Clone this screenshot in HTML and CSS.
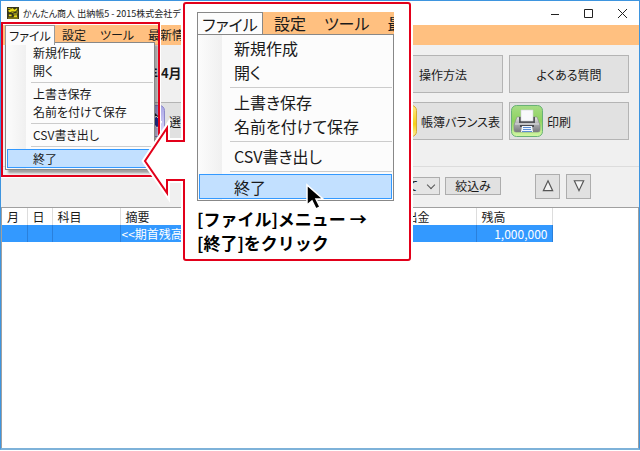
FILE: index.html
```html
<!DOCTYPE html>
<html lang="ja">
<head>
<meta charset="utf-8">
<title>かんたん商人 出納帳5</title>
<link rel="stylesheet" href="styles.css">
</head>
<body>
<main class="window">
  <header class="titlebar">
    <svg class="app-icon" viewBox="0 0 13 13" aria-hidden="true">
      <rect width="13" height="13" fill="#37361c"/>
      <path d="M1 1h3v1H1zM6 1l2 2 3-2v2L9 5H5L3 6 1 4M2 8h3v2H2zM7 7h4v1H7zM8 9h3v2H7" fill="#e9dc16"/>
      <path d="M1 12h11M5 6h2M11 4v3" stroke="#b9ae1c" fill="none"/>
    </svg>
    <h1 class="title">かんたん商人 出納帳5 - 2015株式会社デネ</h1>
    <button class="win-btn" aria-label="最小化"><svg viewBox="0 0 11 11"><path d="M2 6.500h8"/></svg></button>
    <button class="win-btn" aria-label="最大化"><svg viewBox="0 0 11 11"><path d="M1.500 1.500h8v8h-8z"/></svg></button>
    <button class="win-btn" aria-label="閉じる"><svg viewBox="0 0 11 11"><path d="M1 1l9 9M10 1l-9 9"/></svg></button>
  </header>

  <nav class="menubar">
    <button class="menu-tab menu-tab-open">ファイル</button>
    <button class="menu-tab">設定</button>
    <button class="menu-tab">ツール</button>
    <button class="menu-tab">最新情</button>
    <div class="menu">
      <button class="menu-item">新規作成</button>
      <button class="menu-item">開く</button>
      <hr class="menu-line">
      <button class="menu-item">上書き保存</button>
      <button class="menu-item">名前を付けて保存</button>
      <hr class="menu-line">
      <button class="menu-item">CSV書き出し</button>
      <hr class="menu-line">
      <button class="menu-item menu-item-active">終了</button>
    </div>
  </nav>

  <section class="toolbar">
    <p class="period">年 4月</p>
    <button class="tool tool-help">操作方法</button>
    <button class="tool tool-faq">よくある質問</button>
    <button class="tool tool-icon tool-select">
      <svg viewBox="0 0 32 32" aria-hidden="true">
        <defs><linearGradient id="violet" x2="0" y2="1"><stop stop-color="#a9a6e4"/><stop offset="1" stop-color="#e0dcff"/></linearGradient></defs>
        <rect x=".5" y=".5" width="31" height="31" rx="5" fill="url(#violet)" stroke="#8d89cb"/>
        <path d="M14 16l8-8 3 3-8 10z" fill="#1b1c26"/>
        <path d="M23 11l6 6-5 6-5-6z" fill="#2637a3" stroke="#fff"/>
      </svg>選択</button>
    <button class="tool tool-icon tool-balance">
      <svg viewBox="0 0 32 32" aria-hidden="true">
        <defs><linearGradient id="gold" x2="0" y2="1"><stop stop-color="#ffe98a"/><stop offset=".6" stop-color="#f5cf1c"/><stop offset="1" stop-color="#fff0a0"/></linearGradient></defs>
        <rect x=".5" y=".5" width="31" height="31" rx="5" fill="url(#gold)" stroke="#d4aa35"/>
      </svg>帳簿バランス表</button>
    <button class="tool tool-icon tool-print">
      <svg viewBox="0 0 32 32" aria-hidden="true">
        <defs>
          <linearGradient id="green" x2="0" y2="1"><stop stop-color="#a6dc86"/><stop offset=".5" stop-color="#8fd35f"/><stop offset="1" stop-color="#d3f8a4"/></linearGradient>
          <linearGradient id="steel" x2="0" y2="1"><stop stop-color="#e9e9ea"/><stop offset=".5" stop-color="#a8a9ad"/><stop offset="1" stop-color="#77787c"/></linearGradient>
        </defs>
        <rect x=".5" y=".5" width="31" height="31" rx="5" fill="url(#green)" stroke="#69b177"/>
        <path d="M6 12h20l3 8v5q0 2-2 2H5q-2 0-2-2v-5z" fill="url(#steel)" stroke="#85868a" stroke-width=".6"/>
        <path d="M8 12h2v4h12v-4h2v6H8z" fill="#55565b"/>
        <path d="M10 5h12v11H10z" fill="#f8f9fb" stroke="#d0d2d6" stroke-width=".6"/>
        <path d="M4 19h24" stroke="#dcdddf"/>
        <path d="M9 20h14v2H9z" fill="#4b4c51"/>
        <path d="M11 21h10l1 6H10z" fill="#f3f7ff"/>
        <path d="M12 22.500h8M12 24.500h8M11 26.500h10" stroke="#5b8ed4"/>
      </svg>印刷</button>
  </section>

  <section class="filters">
    <span class="kind-box"><select class="kind" aria-label="表示する科目"><option>すべて</option></select></span>
    <button class="narrow">絞込み</button>
    <button class="step step-up" aria-label="上へ"><svg viewBox="0 0 12 12"><path d="M6 1.500l4 8.500H2z"/></svg></button>
    <button class="step" aria-label="下へ"><svg viewBox="0 0 12 12"><path d="M2 1.500h8l-4 8.500z"/></svg></button>
  </section>

  <section class="ledger">
    <table class="book">
      <colgroup><col class="c-day"><col class="c-day"><col class="c-item"><col class="c-note"><col class="c-money"><col class="c-money"><col class="c-money"></colgroup>
      <thead><tr><th>月</th><th>日</th><th>科目</th><th>摘要</th><th></th><th>出金</th><th>残高</th></tr></thead>
      <tbody><tr><td></td><td></td><td></td><td class="note">&lt;&lt;期首残高</td><td></td><td></td><td class="amount">1,000,000</td></tr></tbody>
    </table>
  </section>

  <div class="focus-frame"></div>

  <aside class="callout">
    <svg class="callout-shape" viewBox="0 0 274 264" aria-hidden="true">
      <path d="M46 3H268q2 0 2 2V258q0 2-2 2H46q-2 0-2-2V180H27V193L5 161L27 128V141H44V5q0-2 2-2z" fill="#fff" stroke="#fff" stroke-width="6"/>
      <path d="M46 3H268q2 0 2 2V258q0 2-2 2H46q-2 0-2-2V180H27V193L5 161L27 128V141H44V5q0-2 2-2z" fill="#fff" stroke="#e2001a" stroke-width="2"/>
    </svg>
    <div class="sample">
      <div class="sample-bar">
        <button class="sample-tab sample-tab-open">ファイル</button>
        <button class="sample-tab">設定</button>
        <button class="sample-tab">ツール</button>
        <button class="sample-tab">最</button>
      </div>
      <div class="sample-menu">
        <button class="sample-item">新規作成</button>
        <button class="sample-item">開く</button>
        <hr class="sample-line">
        <button class="sample-item">上書き保存</button>
        <button class="sample-item">名前を付けて保存</button>
        <hr class="sample-line">
        <button class="sample-item">CSV書き出し</button>
        <hr class="sample-line">
        <button class="sample-item sample-item-active">終了</button>
      </div>
      <svg class="pointer" viewBox="0 0 20 28" aria-hidden="true"><path d="M2 2v20l5-4 4 8 4-2-4-8h7z" fill="#000" stroke="#fff" stroke-width="1.500"/></svg>
    </div>
    <p class="caption">[ファイル]メニュー →<br>[終了]をクリック</p>
  </aside>
</main>
</body>
</html>
```
FILE: styles.css
```css
* { box-sizing: border-box; }

body {
  margin: 0;
  font-family: "Noto Sans CJK JP", sans-serif;
  font-size: 12px;
  font-feature-settings: "palt";
  color: #1a1a1a;
  background: #fff;
}

button, select {
  margin: 0;
  padding: 0;
  border: 0;
  font: inherit;
  font-feature-settings: inherit;
  color: inherit;
  background: none;
}

p, h1 { margin: 0; }

.window {
  position: relative;
  display: flex;
  flex-direction: column;
  min-height: 450px;
  height: calc(100vh - 1px);
  overflow: hidden;
  border: 1px solid #3e95df;
  border-bottom: 2px solid #7eb2d9;
  background: #f0f0f0;
}

/* Title bar */
.titlebar {
  display: flex;
  align-items: center;
  height: 24px;
  padding-left: 6px;
  background: #fff;
}
.app-icon { width: 12px; height: 12px; margin-right: 4px; }
.title { flex: 1; font-size: 9px; font-weight: 400; white-space: nowrap; }
.win-btn {
  display: flex;
  align-items: center;
  justify-content: center;
  width: 34px;
  height: 24px;
}
.win-btn svg { width: 11px; height: 11px; fill: none; stroke: #222; }

/* Menu bar and its open menu */
.menubar {
  position: relative;
  display: flex;
  height: 20px;
  padding-left: 4px;
  background: #ffc080;
}
.menu-tab {
  padding: 0 7px;
  font-size: 12px;
  line-height: 18px;
  white-space: nowrap;
}
.menu-tab-open {
  width: 50px;
  padding: 0;
  border: 1px solid #999;
  border-bottom: 0;
  background: #fcfcfc;
  z-index: 3;
}
.menu {
  position: absolute;
  left: 4px;
  top: 17px;
  z-index: 2;
  width: 150px;
  padding: 1px;
  border: 1px solid #888;
  background: linear-gradient(90deg, #fcfcfc, #f0f0f0 20px, #fcfcfc 20px);
  box-shadow: 3px 3px 2px #0005;
}
.menu-item {
  display: block;
  width: 100%;
  height: 18px;
  padding-left: 26px;
  line-height: 16px;
  text-align: left;
}
.menu-line {
  height: 1px;
  margin: 2px 0 2px 24px;
  border: 0;
  background: #ccc;
}
.menu-item-active {
  height: 19px;
  padding-left: 25px;
  border: 1px solid #3399ff;
  background: #c2e0ff;
}

/* Toolbar buttons */
.toolbar {
  display: grid;
  grid-template-columns: repeat(4, 120px);
  grid-template-rows: 38px 38px;
  justify-content: end;
  gap: 9px 6px;
  padding: 10px 10px 26px 0;
  border-bottom: 1px solid #dcdcdc;
}
.period {
  grid-column: 1;
  padding-left: 14px;
  font-size: 13px;
  font-feature-settings: normal;
  font-weight: 700;
  line-height: 36px;
}
.tool {
  border: 1px solid #b4b4b4;
  background: #e1e1e1;
  white-space: nowrap;
}
.tool-help { grid-column: 3; }
.tool-faq { grid-column: 4; }
.tool-icon {
  display: flex;
  align-items: center;
  gap: 4px;
  padding-left: 1px;
}
.tool-icon svg { flex: none; width: 32px; height: 32px; }
.tool-select { grid-column: 1; }
.tool-balance { grid-column: 3; }
.tool-print { grid-column: 4; }

/* Filter row */
.filters {
  display: flex;
  align-items: center;
  justify-content: flex-end;
  height: 40px;
  padding: 0 48px 2px 0;
}
.kind-box { position: relative; display: flex; margin-right: 5px; }
.kind-box::after {
  content: "";
  position: absolute;
  right: 6px;
  top: 5px;
  width: 5px;
  height: 5px;
  border: solid #555;
  border-width: 0 1px 1px 0;
  transform: rotate(45deg);
  pointer-events: none;
}
.kind {
  appearance: none;
  width: 80px;
  height: 18px;
  padding-left: 24px;
  border: 1px solid #adadad;
  line-height: 16px;
  background: #e5e5e5;
}
.narrow {
  width: 56px;
  height: 18px;
  margin-right: 34px;
  border: 1px solid #adadad;
  line-height: 16px;
  background: #e1e1e1;
}
.step {
  display: flex;
  align-items: center;
  justify-content: center;
  width: 25px;
  height: 25px;
  border: 1px solid #adadad;
  background: #e1e1e1;
}
.step-up { margin-right: 6px; }
.step svg { width: 14px; height: 14px; fill: #f4f4f4; stroke: #555; }

/* Ledger table */
.ledger {
  flex: 1;
  border: 1px solid #a0a0a0;
  border-width: 1px 1px 0;
  background: #fff;
}
.book { width: 550px; table-layout: fixed; border-collapse: collapse; }
.c-day { width: 25px; }
.c-item { width: 68px; }
.c-note { width: 204px; }
.c-money { width: 76px; }
.book th, .book td {
  height: 17px;
  padding: 0 4px;
  border-right: 1px solid #ddd;
  line-height: 16px;
  white-space: nowrap;
}
.book th { padding-left: 5px; font-weight: 400; text-align: left; }
.book td { border-color: #2a80dc; color: #fff; background: #3399ff; }
.book .note { padding-left: 1px; }
.book .amount { text-align: right; }

/* Annotations laid over the window */
.focus-frame {
  position: absolute;
  left: 0;
  top: 21px;
  z-index: 4;
  width: 159px;
  height: 155px;
  border: 2px solid #e2001a;
  box-shadow: 0 0 0 1px #fff;
}
.callout {
  position: absolute;
  left: 139px;
  top: -1px;
  z-index: 5;
  width: 274px;
  padding: 12px 20px 0 57px;
}
.callout-shape { position: absolute; left: 0; top: 0; width: 274px; height: 264px; }
.sample { position: relative; font-size: 16px; }
.sample-bar {
  display: flex;
  height: 22px;
  overflow: hidden;
  background: #ffc080;
}
.sample-tab { flex: none; padding: 0 9px; line-height: 22px; }
.sample-tab-open {
  width: 66px;
  margin-right: 2px;
  padding: 0;
  border: 1px solid #888;
  border-bottom: 0;
  background: #fcfcfc;
}
.sample-menu {
  padding: 1px;
  border: 1px solid #888;
  background: linear-gradient(90deg, #fcfcfc, #f0f0f0 24px, #fcfcfc 24px);
}
.sample-item {
  display: block;
  width: 100%;
  height: 24px;
  padding-left: 35px;
  line-height: 22px;
  text-align: left;
}
.sample-line {
  height: 1px;
  margin: 3px 0 2px 31px;
  border: 0;
  background: #ccc;
}
.sample-item-active {
  height: 25px;
  padding-left: 34px;
  border: 1px solid #3399ff;
  background: #c2e0ff;
}
.pointer { position: absolute; right: 69px; bottom: -10px; width: 20px; height: 28px; }
.caption {
  position: relative;
  padding-top: 6px;
  color: #000;
  font-size: 17px;
  font-feature-settings: normal;
  font-weight: 700;
  line-height: 24px;
  white-space: nowrap;
}
```
